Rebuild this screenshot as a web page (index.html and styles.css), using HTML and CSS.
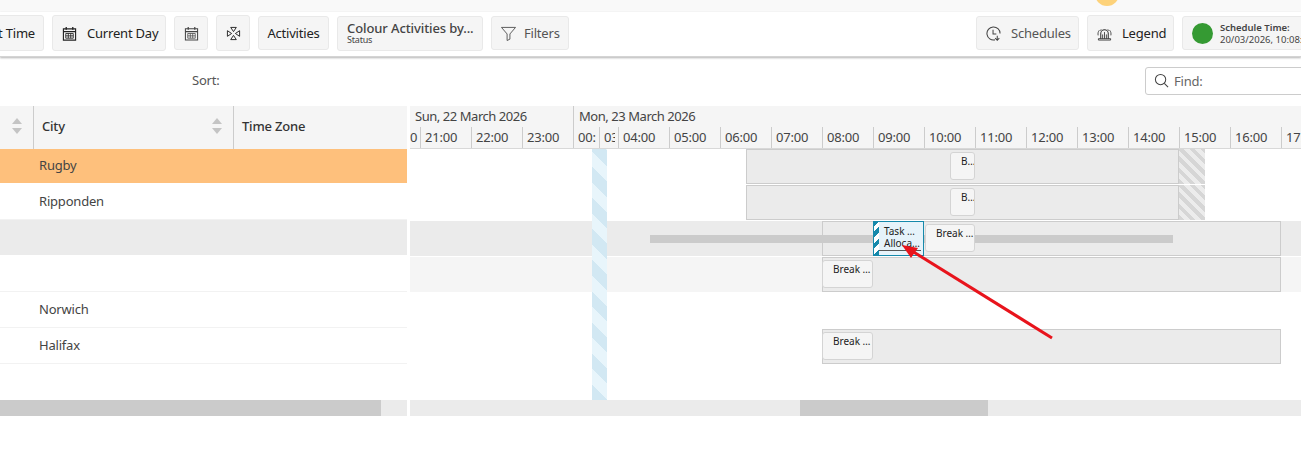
FILE: index.html
```html
<!DOCTYPE html>
<html lang="en">
<head>
<meta charset="utf-8">
<title>Schedule</title>
<link rel="stylesheet" href="styles.css">
</head>
<body>
<div class="page">
  <div class="topstrip"><span class="sun"></span></div>
  <header class="toolbar">
    <div class="tools tools-left">
      <button class="btn btn-tall btn-cut dark">Current Time</button>
      <button class="btn btn-tall dark w-day">
        <svg class="ico" viewBox="0 0 16 16"><path d="M1.500 3h13v12h-13zM1.500 6h13" fill="none" stroke="#222" stroke-width="1.200"/><path d="M4.500 1v3M11.500 1v3" stroke="#222" stroke-width="1.400"/><path d="M4 8h8v5H4zM4 10.500h8M6.700 8v5M9.300 8v5" fill="none" stroke="#222" stroke-width=".9"/></svg>
        <span class="lab-gap">Current Day</span>
      </button>
      <button class="btn btn-icon">
        <svg class="ico" viewBox="0 0 16 16"><path d="M1.500 3h13v12h-13zM1.500 6h13" fill="none" stroke="#444" stroke-width="1.100"/><path d="M4.500 1v3M11.500 1v3" stroke="#444" stroke-width="1.300"/><path d="M4 8h8v5H4zM4 10.500h8M6.700 8v5M9.300 8v5" fill="none" stroke="#444" stroke-width=".8"/></svg>
      </button>
      <button class="btn btn-tall btn-icon">
        <svg class="ico" viewBox="0 0 16 16"><path d="M5 1.500h6L8 6zM5 14.500h6L8 10zM1.500 5v6L6 8zM14.500 5v6L10 8z" fill="none" stroke="#222" stroke-width="1"/></svg>
      </button>
      <button class="btn dark w-act">Activities</button>
      <button class="btn btn-stack">
        <span class="stack-main">Colour Activities by...</span>
        <span class="stack-sub">Status</span>
      </button>
      <button class="btn muted w-filter">
        <svg class="ico" viewBox="0 0 16 16"><path d="M.5 1.500h15L9.500 8.500v5.500l-3 1.500V8.500z" fill="none" stroke="#555" stroke-width="1"/></svg>
        <span class="lab-gap-sm">Filters</span>
      </button>
    </div>
    <div class="tools tools-right">
      <button class="btn muted w-sched">
        <svg class="ico" viewBox="0 0 16 16"><path d="M9.500 14.800A7 7 0 1 1 15 8" fill="none" stroke="#444" stroke-width="1.100"/><path d="M7.500 4V8.500H11M12 10.500v4.500M9.800 13l2.200 2.200L14.200 13" fill="none" stroke="#444" stroke-width="1.100"/></svg>
        <span class="lab-gap">Schedules</span>
      </button>
      <button class="btn btn-tall dark w-leg">
        <svg class="ico" viewBox="0 0 16 16"><path d="M4 13.500V8A4 4 0 0 1 12 8v5.500" fill="none" stroke="#333" stroke-width="1.100"/><path d="M1.500 13.500h13v1.500h-13zM8 6.500v7M6 9v4.500M10 9v4.500M2.500 4.500C1.200 6 .8 8 1.200 10M13.500 4.500c1.300 1.500 1.700 3.500 1.300 5.500M4.500 3.500 3.500 5M11.500 3.500l1 1.500" fill="none" stroke="#333" stroke-width=".9"/></svg>
        <span class="lab-gap">Legend</span>
      </button>
      <div class="status">
        <span class="dot"></span>
        <span class="status-text">
          <span class="status-title">Schedule Time:</span>
          <span class="status-value">20/03/2026, 10:08:15</span>
        </span>
      </div>
    </div>
  </header>
  <div class="sortbar">
    <span class="sort-label">Sort:</span>
    <label class="find">
      <svg class="ico" viewBox="0 0 16 16"><circle cx="7" cy="7" r="5.500" fill="none" stroke="#444" stroke-width="1.100"/><path d="M11 11l4 4" stroke="#444" stroke-width="1.200"/></svg>
      <span class="find-text">Find:</span>
    </label>
  </div>
  <main class="grid">
    <section class="left">
      <div class="thead">
        <div class="th th-a"><span class="sorter"></span></div>
        <div class="th th-b"><span>City</span><span class="sorter"></span></div>
        <div class="th th-c"><span>Time Zone</span></div>
      </div>
      <div class="tr tr-sel">Rugby</div>
      <div class="tr">Ripponden</div>
      <div class="tr tr-grey"></div>
      <div class="tr"></div>
      <div class="tr">Norwich</div>
      <div class="tr">Halifax</div>
      <div class="filler"></div>
      <div class="scroll"><span class="thumb thumb-left"></span></div>
    </section>
    <section class="right">
      <div class="dates">
        <div class="date date-sun">Sun, 22 March 2026</div>
        <div class="date">Mon, 23 March 2026</div>
      </div>
      <div class="hours">
        <div class="hr hr-first">0</div>
        <div class="hr">21:00</div><div class="hr">22:00</div><div class="hr">23:00</div>
        <div class="hr hr-narrow">00:</div><div class="hr hr-narrower"><span class="hr-clip">03:00</span></div>
        <div class="hr">04:00</div><div class="hr">05:00</div><div class="hr">06:00</div>
        <div class="hr">07:00</div><div class="hr">08:00</div><div class="hr">09:00</div>
        <div class="hr">10:00</div><div class="hr">11:00</div><div class="hr">12:00</div>
        <div class="hr">13:00</div><div class="hr">14:00</div><div class="hr">15:00</div>
        <div class="hr">16:00</div><div class="hr">17:00</div>
      </div>
      <div class="canvas">
        <div class="lane">
          <div class="bar bar-early"></div><div class="hatch"></div>
          <div class="chip chip-b">B…</div>
        </div>
        <div class="lane">
          <div class="bar bar-early"></div><div class="hatch"></div>
          <div class="chip chip-b">B…</div>
        </div>
        <div class="lane lane-grey">
          <div class="bar bar-late"></div>
          <div class="lineband"></div>
          <div class="task"><span class="task-line">Task …</span><span class="task-line">Alloca…</span></div>
          <div class="chip chip-break2">Break …</div>
        </div>
        <div class="lane lane-soft">
          <div class="bar bar-late"></div>
          <div class="chip chip-break1">Break …</div>
        </div>
        <div class="lane"></div>
        <div class="lane">
          <div class="bar bar-late"></div>
          <div class="chip chip-break1">Break …</div>
        </div>
        <div class="now"></div>
      </div>
      <div class="scroll scroll-right"><span class="thumb thumb-right"></span></div>
    </section>
  </main>
  <svg class="arrow" viewBox="0 0 1301 474" aria-hidden="true">
    <path d="M1052 338 912 251" stroke="#e8141c" stroke-width="3" fill="none"/>
    <path d="M902 245 918 248 911 258z" fill="#e8141c"/>
  </svg>
</div>
</body>
</html>
```
FILE: styles.css
```css
* { box-sizing: border-box; }
html, body { margin: 0; height: 100%; background: #fff; }
body { overflow: hidden; font-family: "Noto Sans", "Open Sans", sans-serif; font-size: 13px; letter-spacing: -.2px; color: #444; }
.page { position: relative; width: 1301px; height: 474px; overflow: hidden; }

.topstrip { height: 12px; background: #f9f9f9; position: relative; overflow: hidden; }
.sun { position: absolute; left: 1095px; top: -18px; width: 24px; height: 24px; border-radius: 50%; background: #fdd27a; }

.toolbar { height: 45px; display: flex; justify-content: space-between; align-items: center; box-shadow: 0 1px 2px rgba(0,0,0,.3); border-bottom: 1px solid #d4d4d4; padding-bottom: 2px; background: #fff; position: relative; }
.tools { display: flex; align-items: center; gap: 8px; }
.tools-left { margin-left: -42px; }
.tools-right { margin-right: -42px; }

.btn { font: inherit; letter-spacing: inherit; height: 34px; display: flex; align-items: center; padding: 0 9px; background: #f5f5f5; border: 1px solid #e9e9e9; border-radius: 3px; color: #444; white-space: nowrap; }
.btn-tall { height: 36px; }
.btn-cut { width: 86px; justify-content: flex-end; padding: 0 8px; }
.dark { color: #222; }
.muted { color: #555; }
.w-day { width: 114px; }
.w-act { width: 71px; justify-content: center; padding: 0; }
.w-filter { width: 78px; }
.w-sched { width: 103px; }
.w-leg { width: 87px; }
.btn-icon { width: 34px; justify-content: center; padding: 0; }
.ico { width: 15px; height: 15px; flex: none; display: block; }
.lab-gap { margin-left: 10px; }
.lab-gap-sm { margin-left: 8px; }
.btn-stack { height: 35px; width: 146px; flex-direction: column; align-items: flex-start; justify-content: center; padding: 0 9px; }
.stack-main { font-weight: 500; line-height: 14px; color: #444; letter-spacing: -.1px; }
.stack-sub { font-size: 9px; line-height: 10px; color: #444; }

.status { width: 161px; height: 34px; display: flex; align-items: center; gap: 7px; padding-left: 9px; background: #f5f5f5; border: 1px solid #e9e9e9; border-radius: 3px; }
.dot { width: 21px; height: 21px; border-radius: 50%; background: #359a33; flex: none; }
.status-text { display: flex; flex-direction: column; white-space: nowrap; letter-spacing: 0; }
.status-title { font-size: 9.500px; line-height: 12px; font-weight: 600; color: #444; }
.status-value { font-size: 9.500px; line-height: 11px; color: #444; }

.sortbar { height: 49px; display: flex; justify-content: space-between; align-items: center; padding: 0 0 2px 192px; margin-right: -60px; }
.sort-label { color: #555; margin-bottom: 1px; }
.find { width: 216px; height: 28px; border: 1px solid #ccc; border-radius: 3px; display: flex; align-items: center; padding-left: 8px; gap: 5px; color: #666; }

.grid { display: flex; gap: 3px; align-items: flex-start; }
.left { width: 407px; flex: none; }
.right { flex: 1; min-width: 0; position: relative; overflow: hidden; }

.thead { height: 43px; display: flex; background: #f5f5f5; }
.th { display: flex; align-items: center; justify-content: space-between; border-right: 1px solid #ccc; font-weight: 500; color: #333; font-size: 13px; padding-bottom: 4px; }
.th-a { width: 34px; padding-right: 11px; justify-content: flex-end; }
.th-b { width: 200px; padding-left: 8px; padding-right: 11px; }
.th-c { flex: 1; padding-left: 8px; border-right: 0; }
.sorter { width: 10px; height: 16px; position: relative; display: block; }
.sorter::before, .sorter::after { content: ""; position: absolute; left: 0; border-left: 5px solid transparent; border-right: 5px solid transparent; }
.sorter::before { top: 0; border-bottom: 6px solid #c4c4c4; }
.sorter::after { bottom: 0; border-top: 6px solid #c4c4c4; }

.tr { height: 36px; padding: 0 0 1px 39px; display: flex; align-items: center; border-bottom: 1px solid #f2f2f2; color: #444; }
.tr-sel { background: #fec07c; border-bottom-color: #fff; height: 35px; padding-bottom: 2px; }
.tr-grey { background: #ebebeb; border-bottom-color: #fff; }
.filler { height: 36px; }
.scroll { height: 16px; background: #ebebeb; }
.thumb { display: block; height: 16px; background: #cbcbcb; }
.thumb-left { width: 381px; }
.scroll-right { padding-left: 390px; }
.thumb-right { width: 188px; }

.dates { height: 21px; display: flex; background: #f5f5f5; }
.date { padding: 1px 0 0 5px; line-height: 19px; color: #444; white-space: nowrap; letter-spacing: -.45px; }
.date-sun { width: 164px; border-right: 1px solid #ccc; }
.hours { height: 22px; display: flex; background: #f5f5f5; border-bottom: 1px solid #d8d8d8; overflow: hidden; letter-spacing: -.2px; }
.hr { width: 51px; flex: none; border-right: 1px solid #ccc; padding-left: 4px; line-height: 21px; color: #444; overflow: hidden; white-space: nowrap; }
.hr-first { width: 11px; padding: 0; }
.hr-narrow { width: 26px; }
.hr-narrower { width: 19px; }
.hr-clip { display: block; width: 11px; overflow: hidden; }

.canvas { position: relative; height: 251px; }
.lane { height: 36px; position: relative; border-bottom: 1px solid #fff; }
.lane-grey { background: #ebebeb; }
.lane-soft { background: #f5f5f5; }
.bar { position: absolute; top: 0; height: 35px; background: #ebebeb; border: 1px solid #ccc; }
.bar-early { left: 336px; width: 433px; }
.bar-late { left: 412px; width: 459px; }
.hatch { position: absolute; left: 769px; top: 0; width: 26px; height: 35px; background: repeating-linear-gradient(45deg, #d6d6d6 0 4px, #ececec 4px 8px); }
.lineband { position: absolute; left: 240px; width: 523px; top: 14px; height: 8px; background: #cbcbcb; }
.chip { position: absolute; top: 3px; height: 28px; padding: 1px 0 0 10px; background: #f5f5f5; border: 1px solid #d4d4d4; border-radius: 3px; font-size: 10px; line-height: 14px; color: #222; white-space: nowrap; overflow: hidden; letter-spacing: 0; }
.chip-b { left: 540px; width: 25px; }
.chip-break2 { left: 515px; width: 50px; }
.chip-break1 { left: 412px; width: 51px; }
.task { position: absolute; left: 463px; top: 0; width: 51px; height: 35px; padding: 3px 0 0 10px; background-color: #e6f3fa; border: 1px solid #1589ab; display: flex; flex-direction: column; font-size: 10px; line-height: 12px; color: #222; white-space: nowrap; overflow: hidden; letter-spacing: 0; }
.task::before { content: ""; position: absolute; left: 0; top: 0; bottom: 0; width: 5px; background: repeating-linear-gradient(-45deg, #1589ab 0 4px, #fff 4px 8px); }
.task::after { content: ""; position: absolute; left: 5px; right: 2px; bottom: 4px; height: 1px; background: #555; }
.now { position: absolute; left: 182px; top: 0; width: 15px; height: 251px; background: repeating-linear-gradient(45deg, #d2e8f3 0 11px, #e8f5fb 11px 22px); }

.arrow { position: absolute; left: 0; top: 0; width: 1301px; height: 474px; pointer-events: none; }
```
